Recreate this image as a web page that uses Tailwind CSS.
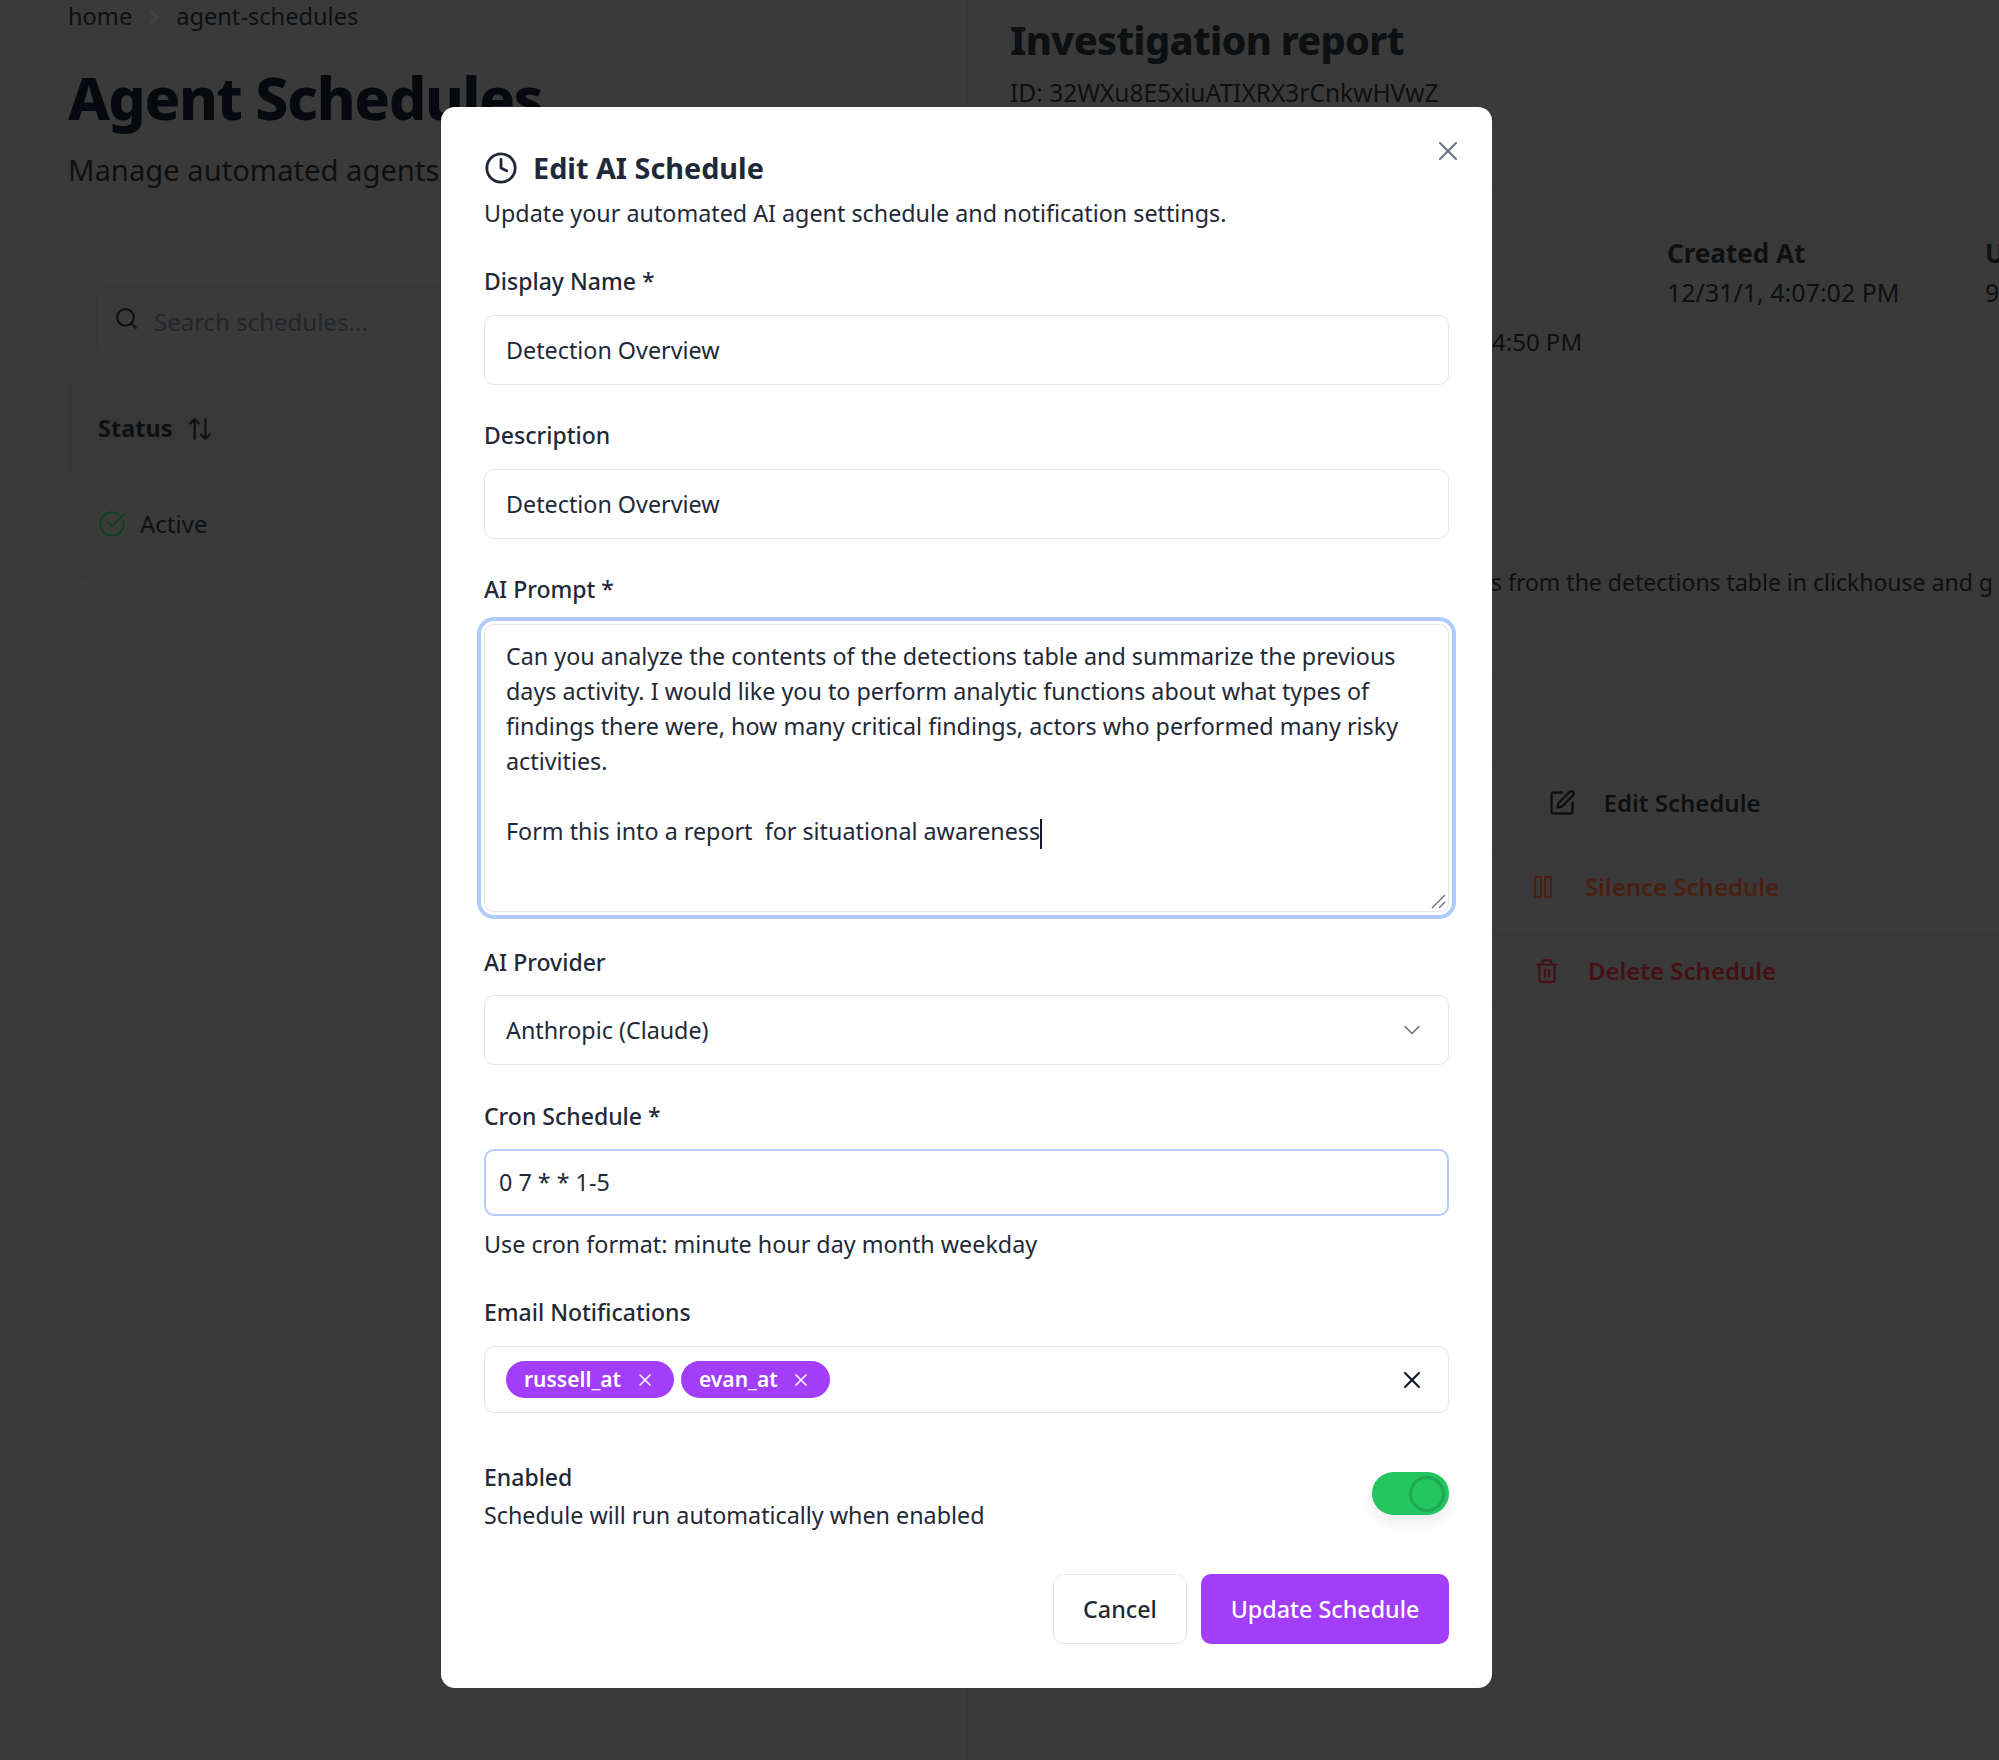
<!DOCTYPE html>
<html lang="en">
<head>
    <meta charset="UTF-8">
    <title>Edit AI Schedule</title>
    <script src="https://cdn.jsdelivr.net/npm/@tailwindcss/browser@4"></script>
</head>
<body class="bg-[#3a3a3a] font-['Noto_Sans',sans-serif]">
<div class="relative w-[1999px] h-[1760px] overflow-hidden flex bg-[#3a3a3a]">
    <!-- sidebar -->
    <div class="w-[40px] shrink-0 bg-[#383838]"></div>

    <!-- schedules list behind the dialog -->
    <div class="w-[928px] shrink-0 pl-[28px] border-r border-[#363636]">
        <div class="h-[34px] flex items-center gap-[14px] text-[23.6px] text-[#0d1012]">
            <span>home</span>
            <svg class="w-[16px] h-[16px] text-[#4a4a4a]" viewBox="0 0 16 16" fill="none" stroke="currentColor" stroke-width="1.2"><path d="M5 2l6 6-6 6"/></svg>
            <span>agent-schedules</span>
        </div>
        <h1 class="mt-[25px] h-[76px] flex items-center text-[59px] font-extrabold tracking-[-1.4px] text-[#06090d]">Agent Schedules</h1>
        <p class="mt-[16px] h-[40px] flex items-center text-[29.2px] text-[#0d1012]">Manage automated agents</p>
        <div class="mt-[69px] h-[318px] w-[860px] rounded-[14px] border border-[#363636]">
            <div class="h-[125px] pl-[27px] pt-[26px] border-b border-[#363636]">
                <div class="h-[69px] rounded-[10px] border border-[#363636] pl-[17px] flex items-center gap-[15px] text-[24px] text-[#23272b]">
                    <svg class="w-[25px] h-[25px] text-[#0d1012] -mt-[6px]" viewBox="0 0 24 24" fill="none" stroke="currentColor" stroke-width="2" stroke-linecap="round"><circle cx="11" cy="11" r="8"/><path d="M21 21l-4.3-4.3"/></svg>
                    <span>Search schedules...</span>
                </div>
            </div>
            <div class="h-[86px] pl-[29px] flex items-center gap-[14px] bg-[#383838] border-b border-[#363636] text-[23.5px] font-bold text-[#0d1012]">
                <span>Status</span>
                <svg class="w-[26px] h-[26px]" viewBox="0 0 24 24" fill="none" stroke="currentColor" stroke-width="2" stroke-linecap="round" stroke-linejoin="round"><path d="M7 21V3M3 7l4-4 4 4M17 3v18M13 17l4 4 4-4"/></svg>
            </div>
            <div class="h-[103px] pl-[29px] flex items-center gap-[14px] text-[24px] text-[#0d1012]">
                <svg class="w-[28px] h-[28px] text-[#0c4020]" viewBox="0 0 24 24" fill="none" stroke="currentColor" stroke-width="1.7" stroke-linecap="round" stroke-linejoin="round"><path d="M21.8 10A10 10 0 1 1 17 3.3"/><path d="M9 11l3 3L22 4"/></svg>
                <span>Active</span>
            </div>
        </div>
    </div>

    <!-- report panel behind the dialog -->
    <div class="w-[1428px] shrink-0 text-[#0d1012]">
        <div class="h-[191px] pl-[42px] border-b border-[#363636]">
            <h2 class="pt-[15px] h-[66px] flex items-center text-[39.6px] font-extrabold tracking-[-0.7px]">Investigation report</h2>
            <p class="mt-[9px] text-[24.5px] leading-[35px]">ID: 32WXu8E5xiuATIXRX3rCnkwHVwZ</p>
        </div>
        <div class="h-[485px] border-b border-[#363636] relative">
            <div class="pl-[699px] pt-[44px]">
                <div class="flex gap-[118px] text-[26px] font-bold leading-[36px]">
                    <span class="w-[200px]">Created At</span><span>U</span>
                </div>
                <div class="flex gap-[118px] text-[25px] leading-[36px] mt-[3px]">
                    <span class="w-[200px] whitespace-nowrap">12/31/1, 4:07:02 PM</span><span>9</span>
                </div>
            </div>
            <p class="pl-[524px] mt-[14px] text-[24px] leading-[36px]">4:50 PM</p>
            <p class="pl-[523px] mt-[204px] text-[23px] leading-[36px] whitespace-nowrap">s from the detections table in clickhouse and g</p>
        </div>
        <div class="h-[91px] border-b border-[#363636]"></div>
        <div class="h-[85px] pb-[12px] pr-[56px] border-b border-[#363636] flex items-center justify-center gap-[28px] text-[24px] font-semibold">
            <svg class="w-[28px] h-[28px]" viewBox="0 0 24 24" fill="none" stroke="currentColor" stroke-width="2" stroke-linecap="round" stroke-linejoin="round"><path d="M12 3H5a2 2 0 0 0-2 2v14a2 2 0 0 0 2 2h14a2 2 0 0 0 2-2v-7"/><path d="M18.4 2.6a2.1 2.1 0 0 1 3 3L12 15l-4 1 1-4z"/></svg>
            <span>Edit Schedule</span>
        </div>
        <div class="h-[84px] pb-[14px] pr-[52px] border-b border-[#363636] flex items-center justify-center gap-[32px] text-[24px] font-semibold text-[#4c1e10]">
            <svg class="w-[20px] h-[22px]" viewBox="0 0 20 22" fill="none" stroke="currentColor" stroke-width="2"><rect x="2" y="1" width="6" height="20" rx="1"/><rect x="12" y="1" width="6" height="20" rx="1"/></svg>
            <span>Silence Schedule</span>
        </div>
        <div class="h-[69px] pr-[54px] border-b border-[#363636] flex items-center justify-center gap-[28px] pt-[2px] text-[24px] font-semibold text-[#461014]">
            <svg class="w-[26px] h-[26px]" viewBox="0 0 24 24" fill="none" stroke="currentColor" stroke-width="2" stroke-linecap="round" stroke-linejoin="round"><path d="M3 6h18M19 6v14a2 2 0 0 1-2 2H7a2 2 0 0 1-2-2V6M8 6V4a2 2 0 0 1 2-2h4a2 2 0 0 1 2 2v2M10 11v6M14 11v6"/></svg>
            <span>Delete Schedule</span>
        </div>
    </div>

    <!-- dialog -->
    <div class="absolute left-[441px] top-[107px] w-[1051px] h-[1581px] rounded-[14px] bg-white px-[43px] pt-[43px] text-[#1f2937] text-[23.3px]">
        <button class="absolute right-[32px] top-[32px] text-[#6b7280]">
            <svg class="w-[24px] h-[24px]" viewBox="0 0 24 24" fill="none" stroke="currentColor" stroke-width="2" stroke-linecap="round"><path d="M4 4l16 16M20 4L4 20"/></svg>
        </button>
        <div class="h-[36px] flex items-center gap-[15px]">
            <svg class="w-[34px] h-[34px]" viewBox="0 0 24 24" fill="none" stroke="currentColor" stroke-width="2" stroke-linecap="round" stroke-linejoin="round"><circle cx="12" cy="12" r="10"/><path d="M12 6v6l4 2"/></svg>
            <h3 class="text-[28.8px] font-bold">Edit AI Schedule</h3>
        </div>
        <p class="mt-[10px] h-[35px] flex items-center">Update your automated AI agent schedule and notification settings.</p>

        <div class="mt-[33px]">
            <label class="h-[35px] flex items-center text-[23px] font-[550]">Display Name *</label>
            <div class="mt-[16px] h-[70px] rounded-[10px] border border-[#e5e7eb] px-[21px] flex items-center">Detection Overview</div>
        </div>
        <div class="mt-[33px]">
            <label class="h-[35px] flex items-center text-[23px] font-[550]">Description</label>
            <div class="mt-[16px] h-[70px] rounded-[10px] border border-[#e5e7eb] px-[21px] flex items-center">Detection Overview</div>
        </div>
        <div class="mt-[33px]">
            <label class="h-[35px] flex items-center text-[23px] font-[550]">AI Prompt *</label>
            <div class="relative mt-[17px] h-[288px] rounded-[10px] border border-[#e5e7eb] ring-[4px] ring-[#aecbfa] ring-offset-[3px] ring-offset-white px-[21px] py-[14px] leading-[35px]">
                Can you analyze the contents of the detections table and summarize the previous<br>
                days activity. I would like you to perform analytic functions about what types of<br>
                findings there were, how many critical findings, actors who performed many risky<br>
                activities.<br>
                <br>
                Form this into a report &nbsp;for situational awareness<span class="inline-block w-[2px] h-[30px] bg-[#111827] align-middle"></span>
                <svg class="absolute right-[1px] bottom-[1px] w-[17px] h-[17px] text-[#6b7280]" viewBox="0 0 17 17" fill="none" stroke="currentColor" stroke-width="1.4"><path d="M2 15L15 2M9 15l6-6"/></svg>
            </div>
        </div>
        <div class="mt-[33px]">
            <label class="h-[35px] flex items-center text-[23px] font-[550]">AI Provider</label>
            <div class="mt-[15px] h-[70px] rounded-[10px] border border-[#e5e7eb] px-[21px] flex items-center justify-between">
                <span>Anthropic (Claude)</span>
                <svg class="w-[20px] h-[20px] text-[#6b7280] mr-[5px]" viewBox="0 0 20 20" fill="none" stroke="currentColor" stroke-width="1.6" stroke-linecap="round" stroke-linejoin="round"><path d="M3 6.5l7 7 7-7"/></svg>
            </div>
        </div>
        <div class="mt-[34px]">
            <label class="h-[35px] flex items-center text-[23px] font-[550]">Cron Schedule *</label>
            <div class="mt-[15px] h-[67px] rounded-[10px] border-[2px] border-[#b5cdfb] px-[13px] flex items-center">0 7 * * 1-5</div>
            <p class="mt-[11px] h-[35px] flex items-center">Use cron format: minute hour day month weekday</p>
        </div>
        <div class="mt-[33px]">
            <label class="h-[35px] flex items-center text-[23px] font-[550]">Email Notifications</label>
            <div class="mt-[16px] h-[67px] rounded-[10px] border border-[#e5e7eb] pl-[21px] pr-[26px] flex items-center gap-[7px]">
                <span class="h-[37px] w-[168px] rounded-full bg-[#a23df9] text-white text-[21px] font-semibold pl-[18px] pr-[22px] flex items-center justify-between">
                    russell_at
                    <svg class="w-[14px] h-[14px]" viewBox="0 0 14 14" fill="none" stroke="currentColor" stroke-width="1.6" stroke-linecap="round"><path d="M2 2l10 10M12 2L2 12"/></svg>
                </span>
                <span class="h-[37px] w-[149px] rounded-full bg-[#a23df9] text-white text-[21px] font-semibold pl-[18px] pr-[22px] flex items-center justify-between">
                    evan_at
                    <svg class="w-[14px] h-[14px]" viewBox="0 0 14 14" fill="none" stroke="currentColor" stroke-width="1.6" stroke-linecap="round"><path d="M2 2l10 10M12 2L2 12"/></svg>
                </span>
                <svg class="ml-auto w-[20px] h-[20px] text-[#111827]" viewBox="0 0 20 20" fill="none" stroke="currentColor" stroke-width="2.2" stroke-linecap="round"><path d="M3 3l14 14M17 3L3 17"/></svg>
            </div>
        </div>
        <div class="mt-[47px] flex justify-between">
            <div>
                <label class="h-[35px] flex items-center text-[23px] font-[550]">Enabled</label>
                <p class="mt-[3px] h-[35px] flex items-center">Schedule will run automatically when enabled</p>
            </div>
            <div class="mt-[12px] w-[77px] h-[43px] rounded-full bg-[#22c55e] shadow-[0_8px_14px_rgba(0,0,0,0.08)] flex items-center justify-end pr-[4px]">
                <span class="w-[36px] h-[36px] rounded-full bg-[#22c55e] border-[3px] border-[#1fa955]"></span>
            </div>
        </div>
        <div class="mt-[41px] flex justify-end gap-[14px]">
            <button class="w-[134px] h-[70px] rounded-[10px] border border-[#e5e7eb] font-[550]">Cancel</button>
            <button class="w-[248px] h-[70px] rounded-[10px] bg-[#a23df9] text-white font-[550]">Update Schedule</button>
        </div>
    </div>
</div>
</body>
</html>
